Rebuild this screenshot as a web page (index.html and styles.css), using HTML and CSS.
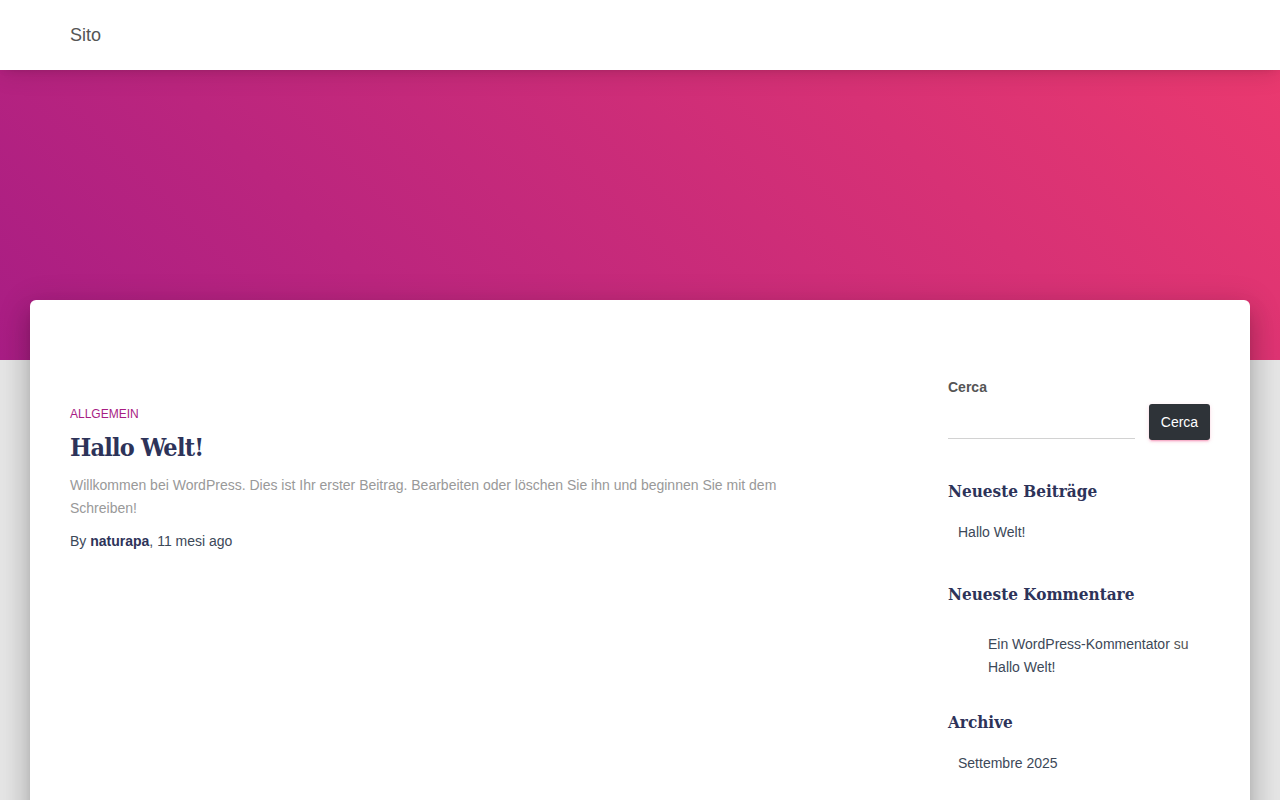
FILE: index.html
```html
<!DOCTYPE html>
<html lang="it">
<head>
<meta charset="utf-8">
<title>Sito</title>
<link rel="stylesheet" href="styles.css">
</head>
<body>
<header class="navbar">
  <a class="brand" href="#">Sito</a>
</header>
<div class="hero"></div>
<main class="card">
  <div class="container">
    <section class="posts">
      <article class="post">
        <div class="category">ALLGEMEIN</div>
        <h2 class="post-title">Hallo Welt!</h2>
        <p class="excerpt">Willkommen bei WordPress. Dies ist Ihr erster Beitrag. Bearbeiten oder löschen Sie ihn und beginnen Sie mit dem Schreiben!</p>
        <p class="byline">By <b>naturapa</b>, 11 mesi ago</p>
      </article>
    </section>
    <aside class="sidebar">
      <div class="widget search">
        <label class="search-label">Cerca</label>
        <div class="search-row">
          <div class="search-input"></div>
          <button class="search-btn">Cerca</button>
        </div>
      </div>
      <div class="widget recent">
        <h3 class="widget-title">Neueste Beiträge</h3>
        <ul class="list"><li>Hallo Welt!</li></ul>
      </div>
      <div class="widget comments-widget">
        <h3 class="widget-title">Neueste Kommentare</h3>
        <ul class="list comments"><li>Ein WordPress-Kommentator <span class="muted">su</span> Hallo Welt!</li></ul>
      </div>
      <div class="widget archive">
        <h3 class="widget-title">Archive</h3>
        <ul class="list"><li>Settembre 2025</li></ul>
      </div>
    </aside>
  </div>
</main>
</body>
</html>
```

FILE: styles.css
```css
html, body {
  margin: 0;
  padding: 0;
}
body {
  background: #e5e5e5;
  font-family: "Liberation Sans", Arial, sans-serif;
  color: #3c4858;
  overflow: hidden;
  height: 800px;
}
.navbar {
  position: relative;
  z-index: 3;
  height: 70px;
  background: #fff;
  display: flex;
  align-items: center;
  padding-left: 70px;
  box-shadow: 0 1px 10px -6px rgba(0,0,0,.42), 0 4px 25px 0 rgba(0,0,0,.12);
}
.brand {
  font-size: 18px;
  color: #555;
  text-decoration: none;
}
.hero {
  height: 290px;
  background: linear-gradient(45deg, #a81d84 0%, #ea396f 100%);
}
.card {
  position: relative;
  z-index: 2;
  margin: -60px 30px 0;
  background: #fff;
  border-radius: 6px;
  box-shadow: 0 16px 24px 2px rgba(0,0,0,.14), 0 6px 30px 5px rgba(0,0,0,.12), 0 8px 10px -5px rgba(0,0,0,.2);
  min-height: 600px;
}
.container {
  display: flex;
  padding: 0 40px;
}
.posts {
  width: 750px;
  padding-top: 107px;
}
.sidebar {
  width: 262px;
  margin-left: auto;
  padding-top: 79px;
}
.category {
  font-size: 12px;
  color: #a81d84;
  line-height: 14px;
}
.post-title {
  font-family: "DejaVu Serif Condensed", "DejaVu Serif", "Liberation Serif", serif;
  font-stretch: condensed;
  font-weight: 700;
  font-size: 25px;
  color: #2d3359;
  margin: 10px 0 9px;
  line-height: 34px;
  letter-spacing: -0.8px;
}
.excerpt {
  font-size: 14px;
  line-height: 23px;
  color: #999;
  margin: 0 0 11px;
}
.byline {
  font-size: 14px;
  line-height: 20px;
  color: #3c4858;
  margin: 0;
}
.byline b {
  color: #2d3359;
}
.search-label {
  display: block;
  font-size: 14px;
  font-weight: 700;
  color: #555;
  line-height: 16px;
}
.search-row {
  display: flex;
  align-items: flex-start;
  gap: 14px;
  margin-top: 9px;
}
.search-input {
  flex: 1;
  height: 34px;
  border-bottom: 1px solid #d2d2d2;
}
.search-btn {
  font-family: "Liberation Sans", Arial, sans-serif;
  font-size: 14px;
  color: #fff;
  background: #2e3338;
  border: 0;
  border-radius: 3px;
  height: 36px;
  width: 61px;
  padding: 0;
  box-shadow: 0 2px 2px 0 rgba(233,30,99,.14), 0 3px 1px -2px rgba(233,30,99,.2), 0 1px 5px 0 rgba(233,30,99,.12);
}
.widget-title {
  font-family: "DejaVu Serif Condensed", "DejaVu Serif", "Liberation Serif", serif;
  font-stretch: condensed;
  font-weight: 700;
  font-size: 17px;
  color: #2d3359;
  margin: 0;
  line-height: 24px;
}
.recent .widget-title {
  margin-top: 39px;
}
.comments-widget .widget-title {
  margin-top: 38px;
}
.archive .widget-title {
  margin-top: 31px;
}
.list {
  list-style: none;
  margin: 18px 0 0;
  padding: 0 0 0 10px;
  font-size: 14px;
  line-height: 23px;
  color: #3c4858;
}
.list.comments {
  margin-top: 27px;
  padding-left: 40px;
}
.muted {
  color: #555;
}
```
